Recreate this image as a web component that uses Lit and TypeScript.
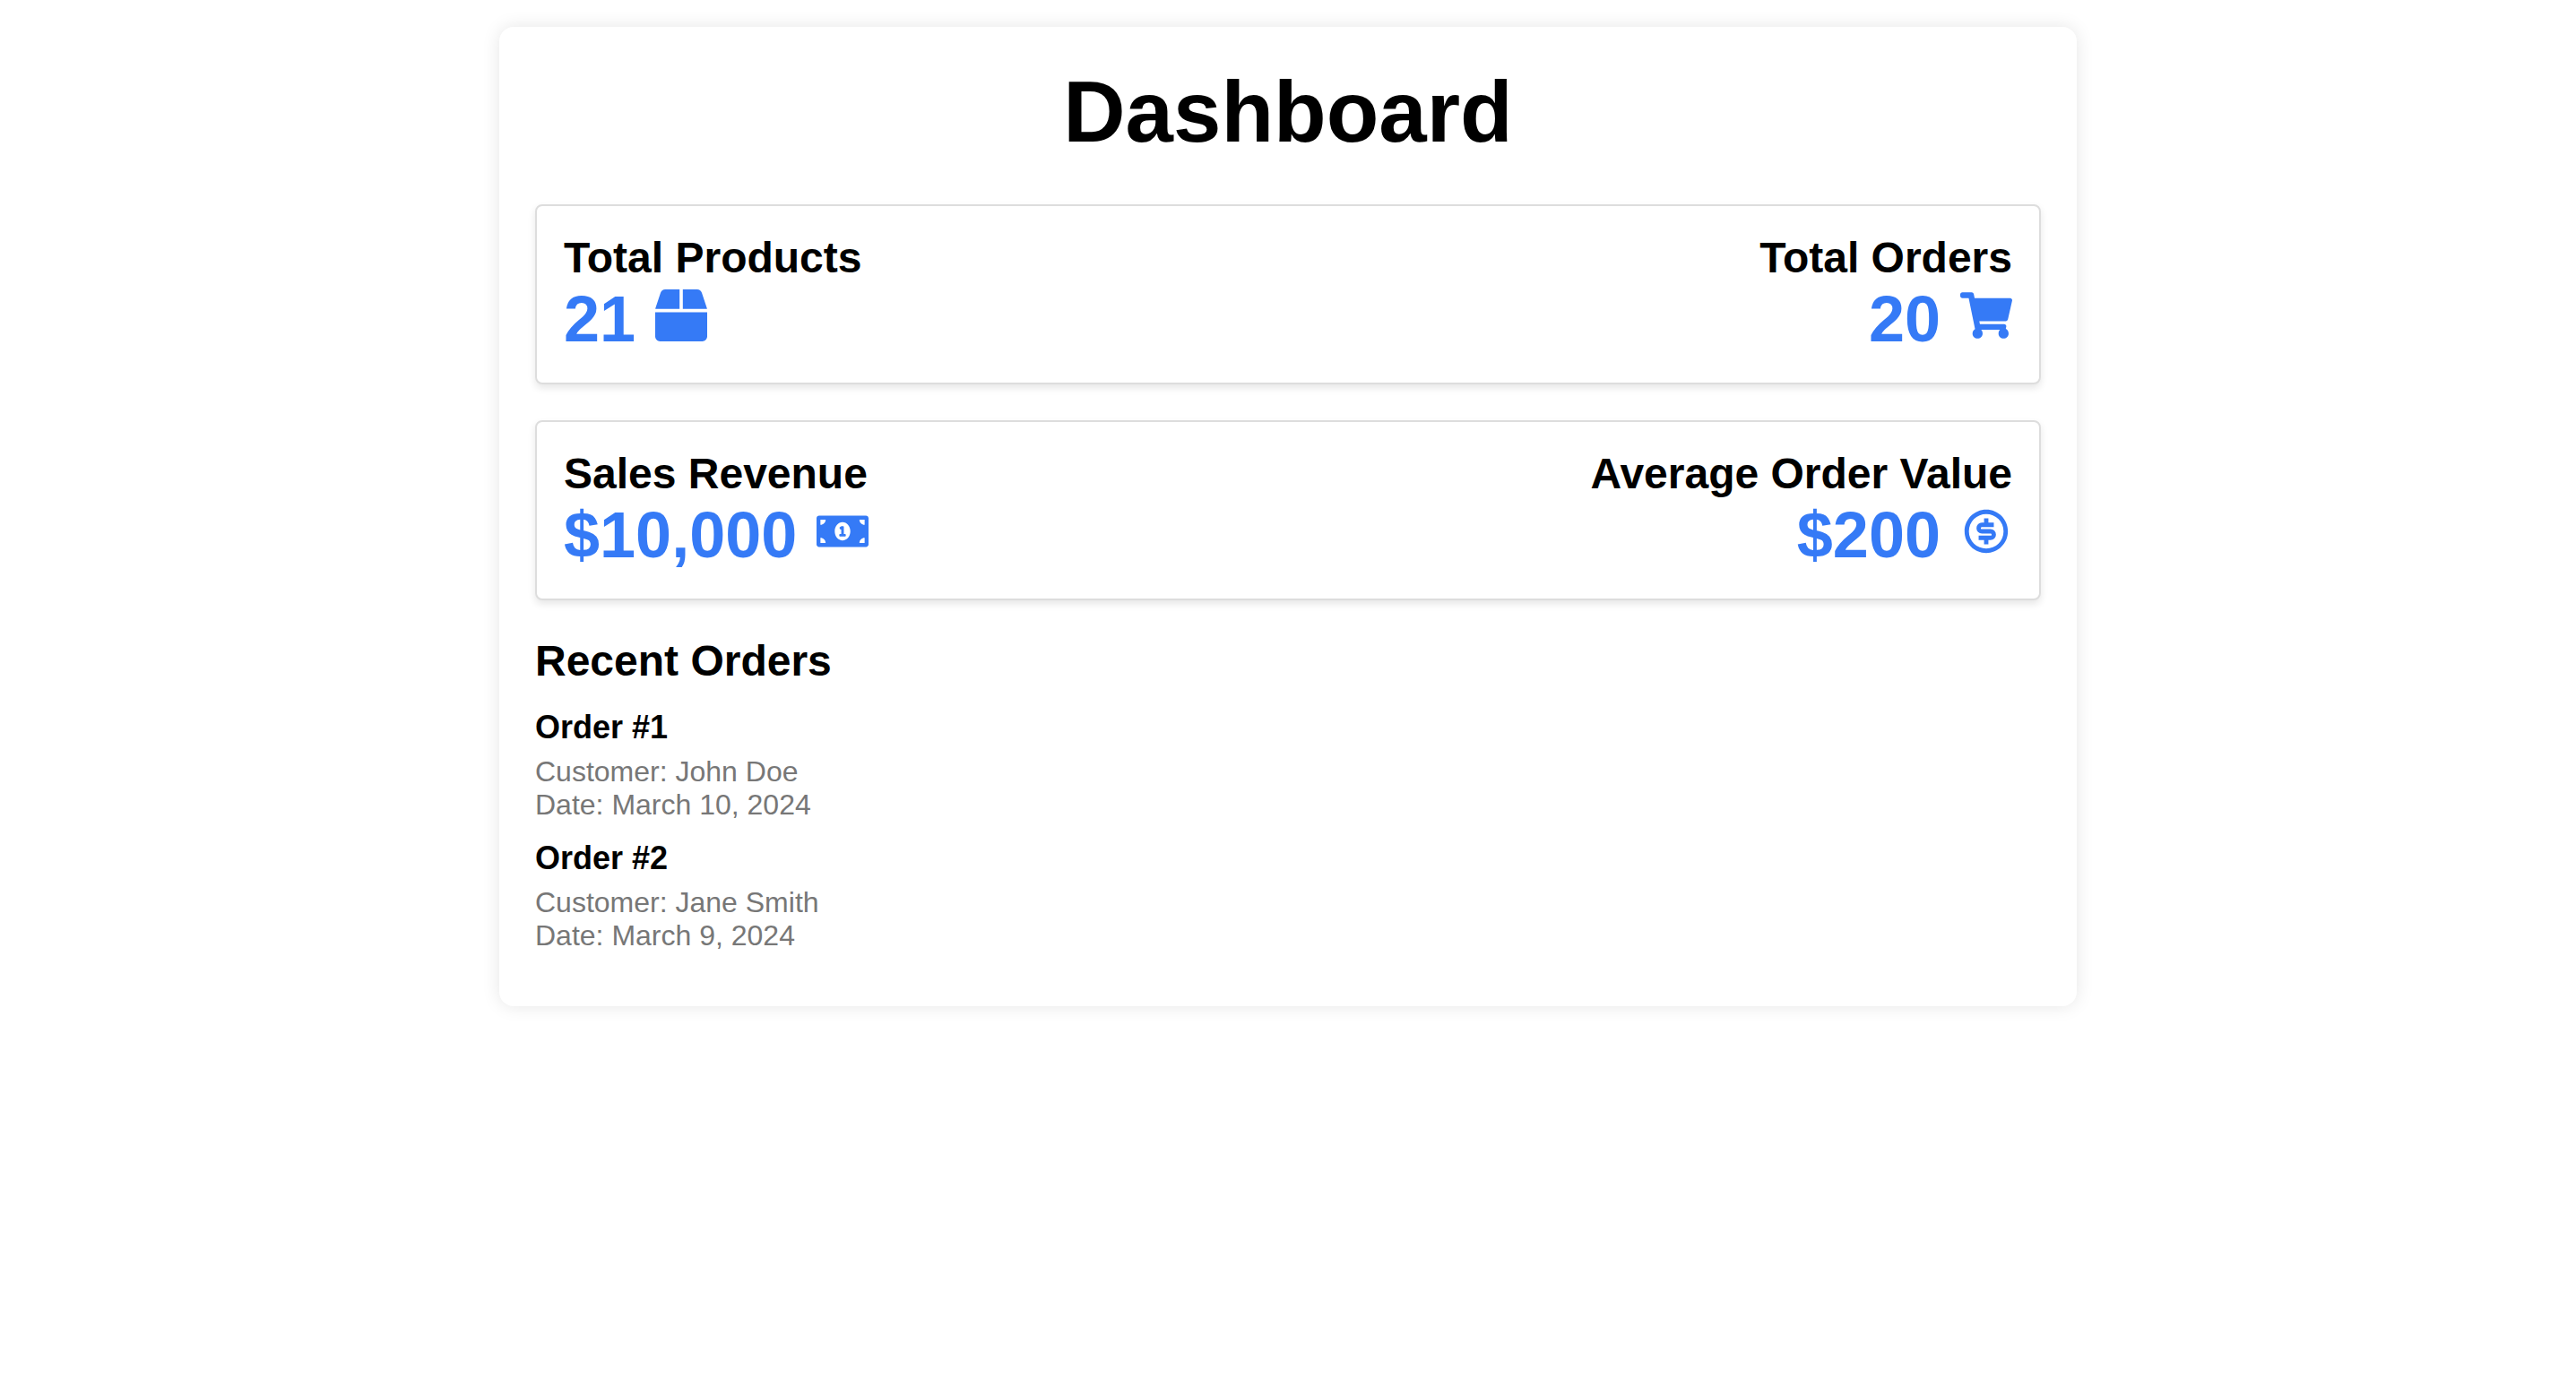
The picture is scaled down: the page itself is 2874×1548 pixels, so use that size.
import { LitElement, html, css, svg } from "lit";
import { customElement, property } from "lit/decorators.js";

const icons = {
  box: {
    viewBox: "0 0 512 512",
    shape: svg`<path d="M509.5 184.6L458.9 32.8C452.4 13.2 434.1 0 413.4 0H272v192h238.7c-.4-2.5-.4-5-1.2-7.4zM240 0H98.6c-20.7 0-39 13.2-45.5 32.8L2.5 184.6c-.8 2.4-.8 4.9-1.2 7.4H240V0zM0 224v240c0 26.5 21.5 48 48 48h416c26.5 0 48-21.5 48-48V224H0z"/>`,
  },
  cart: {
    viewBox: "0 0 576 512",
    shape: svg`<path d="M528.12 301.319l47.273-208C578.806 78.301 567.391 64 551.99 64H159.208l-9.166-44.81C147.758 8.021 137.93 0 126.529 0H24C10.745 0 0 10.745 0 24v16c0 13.255 10.745 24 24 24h69.883l70.248 343.435C147.325 417.1 136 435.222 136 456c0 30.928 25.072 56 56 56s56-25.072 56-56c0-15.674-6.447-29.835-16.824-40h209.647C430.447 426.165 424 440.326 424 456c0 30.928 25.072 56 56 56s56-25.072 56-56c0-22.172-12.888-41.332-31.579-50.405l5.517-24.276c3.413-15.018-8.002-29.319-23.403-29.319H218.117l-6.545-32h293.145c11.206 0 20.92-7.754 23.403-18.681z"/>`,
  },
  bill: {
    viewBox: "0 0 640 512",
    shape: svg`<path d="M352 288h-16v-88c0-4.42-3.58-8-8-8h-13.58c-4.74 0-9.37 1.4-13.31 4.03l-15.33 10.22a7.994 7.994 0 0 0-2.22 11.09l8.88 13.31a7.994 7.994 0 0 0 11.09 2.22l.47-.31V288h-16c-4.42 0-8 3.58-8 8v16c0 4.42 3.58 8 8 8h64c4.42 0 8-3.58 8-8v-16c0-4.42-3.58-8-8-8zM608 64H32C14.33 64 0 78.33 0 96v320c0 17.67 14.33 32 32 32h576c17.67 0 32-14.33 32-32V96c0-17.67-14.33-32-32-32zM48 400v-64c35.35 0 64 28.65 64 64H48zm0-224v-64h64c0 35.35-28.65 64-64 64zm272 192c-53.02 0-96-50.15-96-112 0-61.86 42.98-112 96-112s96 50.13 96 112c0 61.87-43 112-96 112zm272 32h-64c0-35.35 28.65-64 64-64v64zm0-224c-35.35 0-64-28.65-64-64h64v64z"/>`,
  },
  coin: {
    viewBox: "0 0 24 24",
    shape: svg`<path d="M12 22C6.477 22 2 17.523 2 12S6.477 2 12 2s10 4.477 10 10-4.477 10-10 10zm0-2a8 8 0 1 0 0-16 8 8 0 0 0 0 16zm-3.5-6H14a.5.5 0 1 0 0-1h-4a2.5 2.5 0 1 1 0-5h1V6h2v2h2.5v2H10a.5.5 0 1 0 0 1h4a2.5 2.5 0 1 1 0 5h-1v2h-2v-2H8.5v-2z"/>`,
  },
};

type IconName = keyof typeof icons;

interface Stat {
  label: string;
  value: string;
  icon: IconName;
}

interface Order {
  id: number;
  customer: string;
  date: string;
}

const statRows: Stat[][] = [
  [
    { label: "Total Products", value: "21", icon: "box" },
    { label: "Total Orders", value: "20", icon: "cart" },
  ],
  [
    { label: "Sales Revenue", value: "$10,000", icon: "bill" },
    { label: "Average Order Value", value: "$200", icon: "coin" },
  ],
];

const orders: Order[] = [
  { id: 1, customer: "John Doe", date: "March 10, 2024" },
  { id: 2, customer: "Jane Smith", date: "March 9, 2024" },
];

@customElement("stat-card")
export class StatCard extends LitElement {
  @property({ attribute: false }) stats: Stat[] = [];

  static styles = css`
    :host {
      display: block;
    }
    .card {
      display: flex;
      justify-content: space-between;
      padding: 30px;
      border: 2px solid #ddd;
      border-radius: 8px;
      background: #fff;
      box-shadow: 0 4px 8px rgba(0, 0, 0, 0.1);
    }
    .stat {
      display: flex;
      flex-direction: column;
      align-items: flex-start;
    }
    .stat:last-child {
      align-items: flex-end;
    }
    .label {
      margin: 0;
      font-size: 48px;
      line-height: 55px;
      font-weight: 700;
    }
    .value {
      display: flex;
      align-items: baseline;
      gap: 22px;
      margin: 0;
      font-size: 72px;
      line-height: 82px;
      font-weight: 700;
      color: #357af6;
    }
    .icon {
      width: 58px;
      height: 58px;
      fill: currentColor;
    }
  `;

  render() {
    return html`<section class="card">
      ${this.stats.map(
        (stat) => html`<div class="stat">
          <h2 class="label">${stat.label}</h2>
          <p class="value">
            <span>${stat.value}</span>
            <svg class="icon" viewBox=${icons[stat.icon].viewBox} aria-hidden="true">
              ${icons[stat.icon].shape}
            </svg>
          </p>
        </div>`
      )}
    </section>`;
  }
}

@customElement("app-root")
export class AppRoot extends LitElement {
  static styles = css`
    :host {
      display: block;
      padding: 30px;
      font-family: Arial, "Liberation Sans", sans-serif;
      color: #000;
    }
    .dashboard {
      box-sizing: border-box;
      max-width: 1760px;
      margin: 0 auto;
      padding: 40px;
      border-radius: 16px;
      background: #fff;
      box-shadow: 0 0 20px rgba(0, 0, 0, 0.1);
    }
    .title {
      margin: 0 0 48px;
      font-size: 96px;
      line-height: 110px;
      text-align: center;
    }
    .cards {
      display: flex;
      flex-direction: column;
      gap: 40px;
      margin-bottom: 40px;
    }
    .heading {
      margin: 0 0 26px;
      font-size: 48px;
      line-height: 55px;
    }
    .orders {
      margin: 0;
      padding: 0;
      list-style: none;
    }
    .order {
      margin-bottom: 20px;
    }
    .order-name {
      margin: 0 0 10px;
      font-size: 36px;
      line-height: 42px;
    }
    .detail {
      margin: 0;
      font-size: 32px;
      line-height: 37px;
      color: #777;
    }
  `;

  render() {
    return html`<main class="dashboard">
      <h1 class="title">Dashboard</h1>
      <div class="cards">
        ${statRows.map((row) => html`<stat-card .stats=${row}></stat-card>`)}
      </div>
      <section>
        <h2 class="heading">Recent Orders</h2>
        <ul class="orders">
          ${orders.map(
            (order) => html`<li class="order">
              <h3 class="order-name">Order #${order.id}</h3>
              <p class="detail">Customer: ${order.customer}</p>
              <p class="detail">Date: ${order.date}</p>
            </li>`
          )}
        </ul>
      </section>
    </main>`;
  }
}
